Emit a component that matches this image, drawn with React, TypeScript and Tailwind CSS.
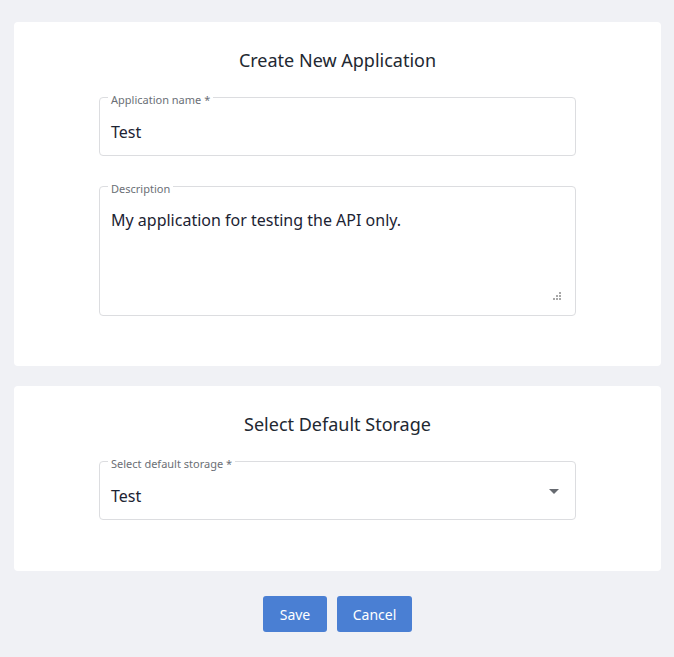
import React from 'react';

const font = { fontFamily: "'Noto Sans', 'Open Sans', sans-serif" };

function Outlined({ label, height, children }: { label: string; height: string; children: React.ReactNode }) {
  return (
    <div className={`relative w-[477px] ${height} rounded-[4px] border border-[#dcdde0]`}>
      <span className="absolute left-[8px] top-[-5px] bg-white px-[3px] text-[11px] leading-[14px] text-[#6b6f76]">
        {label}
      </span>
      {children}
    </div>
  );
}

export default function App() {
  return (
    <div className="min-h-[657px] w-full bg-[#f0f1f5] pl-[14px] pr-[13px] pt-[22px] pb-[25px]" style={font}>
      {/* Application card */}
      <section className="flex flex-col items-center rounded-[4px] bg-white pt-[26px] pb-[50px]">
        <h2 className="text-[18px] leading-[24px] text-[#222831]">Create New Application</h2>
        <div className="mt-[25px]">
          <Outlined label="Application name *" height="h-[59px]">
            <div className="pl-[11px] pt-[23px] text-[16px] leading-[22px] text-[#1c2333]">Test</div>
          </Outlined>
        </div>
        <div className="mt-[30px]">
          <Outlined label="Description" height="h-[130px]">
            <div className="pl-[11px] pt-[22px] text-[16px] leading-[22px] text-[#1c2333]">
              My application for testing the API only.
            </div>
            <svg className="absolute right-[14px] bottom-[15px]" width="8" height="8" viewBox="0 0 8 8">
              <rect x="6" y="0" width="2" height="2" fill="#a8a8a8" />
              <rect x="3" y="3" width="2" height="2" fill="#a8a8a8" />
              <rect x="6" y="3" width="2" height="2" fill="#a8a8a8" />
              <rect x="0" y="6" width="2" height="2" fill="#a8a8a8" />
              <rect x="3" y="6" width="2" height="2" fill="#a8a8a8" />
              <rect x="6" y="6" width="2" height="2" fill="#a8a8a8" />
            </svg>
          </Outlined>
        </div>
      </section>

      {/* Storage card */}
      <section className="mt-[20px] flex flex-col items-center rounded-[4px] bg-white pt-[26px] pb-[51px]">
        <h2 className="text-[18px] leading-[24px] text-[#222831]">Select Default Storage</h2>
        <div className="mt-[25px]">
          <Outlined label="Select default storage *" height="h-[59px]">
            <div className="flex items-center justify-between pl-[11px] pr-[16px] pt-[23px]">
              <span className="text-[16px] leading-[22px] text-[#1c2333]">Test</span>
              <svg width="10" height="5" viewBox="0 0 10 5" className="mt-[-10px]">
                <path d="M0 0h10L5 5z" fill="#666a70" />
              </svg>
            </div>
          </Outlined>
        </div>
      </section>

      <div className="mt-[25px] flex justify-center gap-[10px]">
        <button className="h-[36px] w-[64px] rounded-[3px] bg-[#4a7fd3] text-[14px] text-white">Save</button>
        <button className="h-[36px] w-[75px] rounded-[3px] bg-[#4a7fd3] text-[14px] text-white">Cancel</button>
      </div>
    </div>
  );
}
